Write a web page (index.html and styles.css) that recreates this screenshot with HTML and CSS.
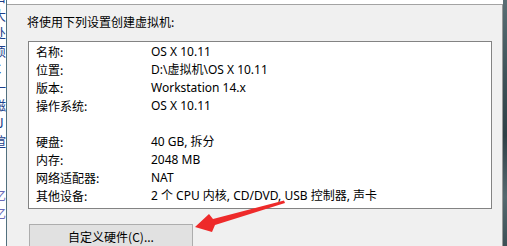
FILE: index.html
```html
<!DOCTYPE html>
<html lang="zh">
<head>
<meta charset="utf-8">
<link rel="stylesheet" href="styles.css">
</head>
<body>
<div class="page">
  <div class="left-strip">
    <div class="behind">
      <span class="top">口</span>
      <span>大</span>
      <span>处</span>
      <span>硕</span>
      <span>C</span>
      <span>一</span>
      <span>磁</span>
      <span>IJ</span>
      <span>喧</span>
      <span>&nbsp;</span>
      <span>&nbsp;</span>
      <span class="pale">亿</span>
      <span class="pale">亿</span>
    </div>
  </div>
  <div class="vline"></div>
  <div class="dialog">
    <div class="title">将使用下列设置创建虚拟机:</div>
    <div class="summary">
      <div class="row"><span class="label">名称:</span><span class="value">OS X 10.11</span></div>
      <div class="row"><span class="label">位置:</span><span class="value">D:\虚拟机\OS X 10.11</span></div>
      <div class="row"><span class="label">版本:</span><span class="value">Workstation 14.x</span></div>
      <div class="row"><span class="label">操作系统:</span><span class="value">OS X 10.11</span></div>
      <div class="row"></div>
      <div class="row"><span class="label">硬盘:</span><span class="value">40 GB, 拆分</span></div>
      <div class="row"><span class="label">内存:</span><span class="value">2048 MB</span></div>
      <div class="row"><span class="label">网络适配器:</span><span class="value">NAT</span></div>
      <div class="row"><span class="label">其他设备:</span><span class="value">2 个 CPU 内核, CD/DVD, USB 控制器, 声卡</span></div>
    </div>
    <button class="custom-btn">自定义硬件(C)...</button>
  </div>
  <div class="desktop"></div>
  <svg class="arrow" width="507" height="246" viewBox="0 0 507 246">
    <polygon points="195,227 209,214 213,219 284,200.5 285,203 215,225 212,232" fill="#ee2a2a"/>
  </svg>
</div>
</body>
</html>
```
FILE: styles.css
```css
html, body {
  margin: 0;
  padding: 0;
  background: #ffffff;
  overflow: hidden;
}

.page {
  position: relative;
  display: flex;
  width: 507px;
  height: 246px;
  overflow: hidden;
  font-family: "Noto Sans", "Noto Sans CJK SC", sans-serif;
  font-size: 12px;
  color: #000;
}

.left-strip {
  width: 6px;
  background: #ffffff;
  overflow: hidden;
}

.behind {
  display: flex;
  flex-direction: column;
  margin-left: -7px;
  margin-top: -12px;
  font-family: "Noto Sans CJK SC", sans-serif;
  font-size: 13px;
  line-height: 18px;
  color: #1c3f8c;
}

.behind .pale {
  color: #6a6ab8;
}

.vline {
  width: 1px;
  background: #52707e;
}

.dialog {
  width: 495px;
  margin-top: 4px;
  border-top: 1px solid #a3a3a3;
  border-right: 1px solid #9a9a9a;
  background: #f0f0f0;
  display: flex;
  flex-direction: column;
  align-items: flex-start;
}

.title {
  margin: 8px 0 0 20px;
  line-height: 18px;
  font-family: "Noto Sans CJK SC", sans-serif;
}

.summary {
  box-sizing: border-box;
  width: 464px;
  height: 168px;
  margin: 10px 0 0 21px;
  padding: 1px 0 3px 7px;
  background: #ffffff;
  border: 1px solid #838383;
}

.row {
  display: flex;
  height: 18px;
  line-height: 18px;
  white-space: nowrap;
}

.label {
  width: 115px;
  flex: none;
  font-family: "Noto Sans CJK SC", sans-serif;
}

.value {
  color: #000;
}

.custom-btn {
  box-sizing: border-box;
  width: 164px;
  height: 26px;
  margin: 15px 0 0 22px;
  padding: 0;
  background: #e1e1e1;
  border: 1px solid #adadad;
  font-family: "Noto Sans CJK SC", sans-serif;
  font-size: 12px;
  line-height: 24px;
  color: #000;
}

.desktop {
  flex: 1;
  background: linear-gradient(180deg, #596e74 0%, #3f5359 30%, #2f4046 55%, #55696f 80%, #3c4f55 100%);
}

.arrow {
  position: absolute;
  left: 0;
  top: 0;
  pointer-events: none;
}
```
